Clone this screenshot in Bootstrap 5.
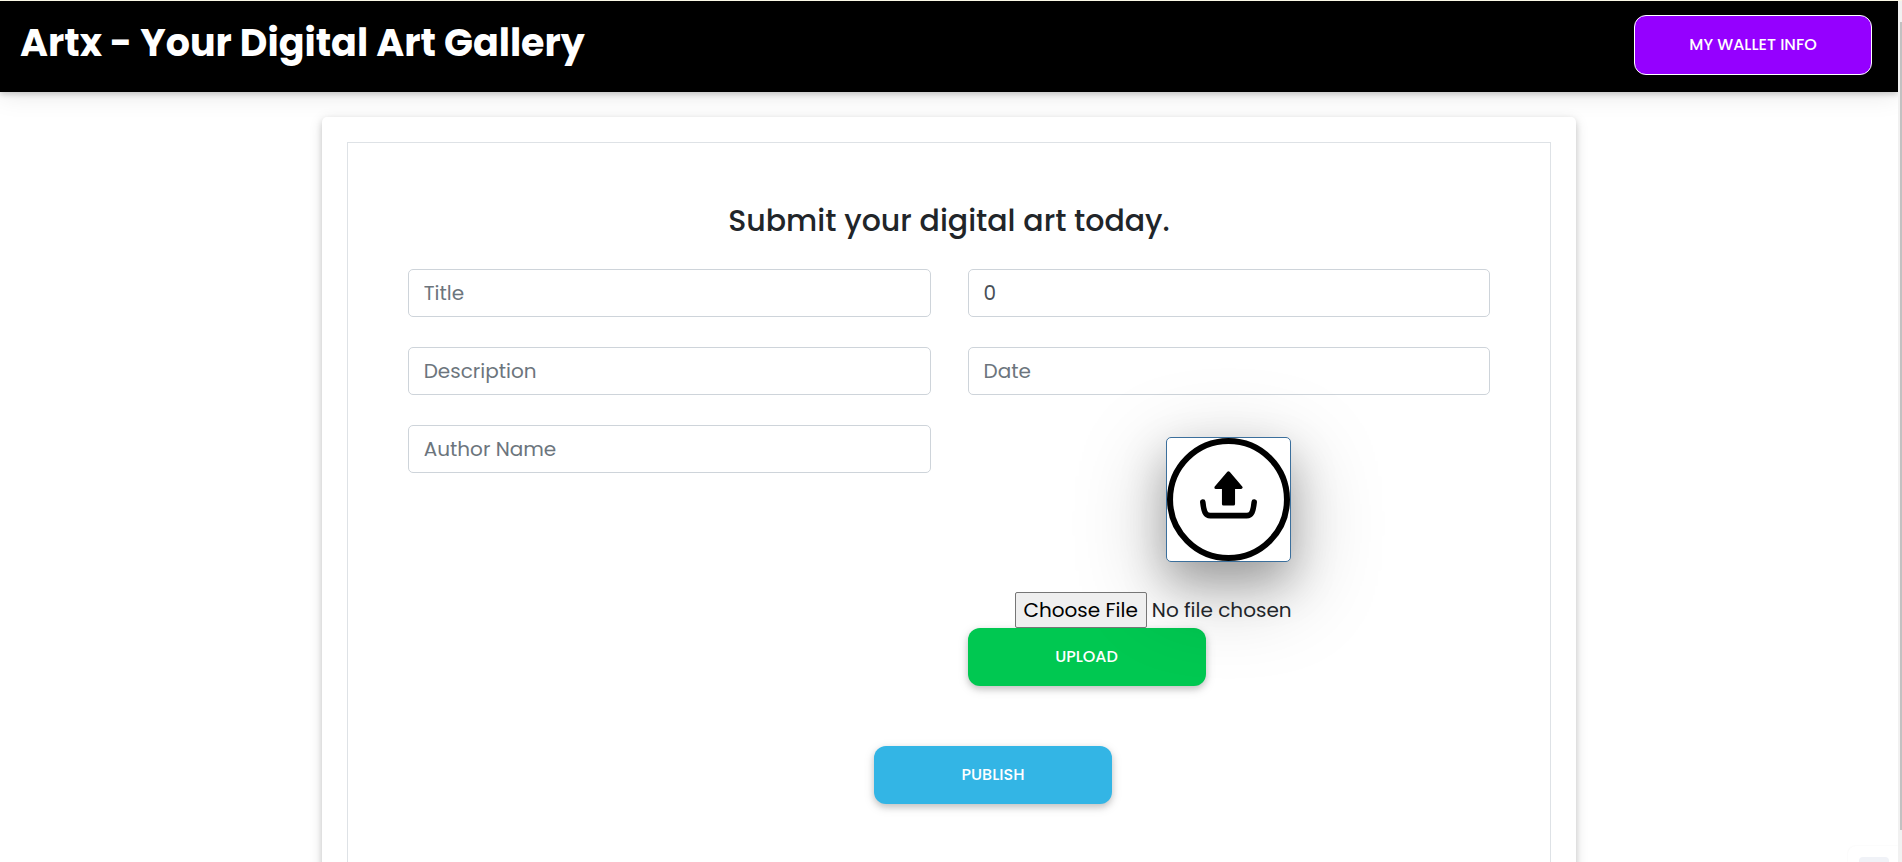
<!DOCTYPE html>
<html lang="en">
<head>
<meta charset="utf-8">
<meta name="viewport" content="width=device-width, initial-scale=1">
<title>Artx - Your Digital Art Gallery</title>
<link href="https://cdn.jsdelivr.net/npm/bootstrap@5.3.0/dist/css/bootstrap.min.css" rel="stylesheet">
<style>
  :root { --app-font: Poppins, Inter, "Open Sans", sans-serif; }
  body { font-family: var(--app-font); font-size: 20px; color: #212529; background: #fff; height: 100vh; overflow: hidden; border-top: 1px solid #fbf8e6; padding-right: 4px; }
  .site-bar { background: #000; height: 91px; padding: 0 26px 4px 20px; box-shadow: 0 2px 6px rgba(0,0,0,.2), 0 3px 24px rgba(0,0,0,.1); }
  .site-title { font-size: 38px; font-weight: 700; line-height: 48px; margin-bottom: 4px; color: #fff; text-decoration: none; }
  .action-btn { --bs-btn-color: #fff; --bs-btn-hover-color: #fff; --bs-btn-border-width: 0; width: 238px; height: 58px; border-radius: 12px; font-size: 16px; font-weight: 500; line-height: 20px; box-shadow: 0 3px 6px rgba(0,0,0,.16), 0 3px 12px rgba(0,0,0,.12); }
  .wallet-btn { --bs-btn-bg: #9500ff; --bs-btn-hover-bg: #8300e0; --bs-btn-border-width: 1px; --bs-btn-border-color: #fff; height: 60px; }
  .upload-btn { --bs-btn-bg: #00c851; --bs-btn-hover-bg: #00b348; }
  .publish-btn { --bs-btn-bg: #33b5e5; --bs-btn-hover-bg: #28a3d1; }
  .sheet { width: 66.1%; margin: 25px auto 0; padding: 25px; background: #fff; border-radius: 5px; box-shadow: 0 3px 6px rgba(0,0,0,.16), 0 3px 14px rgba(0,0,0,.12); }
  .sheet-inner { border: 1px solid #dee2e6; padding: 60px 60px 100px; }
  .sheet-title { font-size: 30px; font-weight: 500; line-height: 36px; margin-bottom: 30px; }
  .form-control { height: 48px; font-size: 20px; padding: 6px 15px; border-color: #ced4da; border-radius: 5px; color: #495057; background: transparent; }
  .form-control::placeholder { color: #6c757d; }
  .form-grid { --bs-gutter-x: 37px; --bs-gutter-y: 30px; }
  .preview { width: 125px; height: 125px; margin: 12px auto 30px; position: relative; background: #fff; border: 1px solid #3b6f9c; border-radius: 5px; box-shadow: 0 20px 44px rgba(0,0,0,.26), 0 24px 90px rgba(0,0,0,.26); }
  .preview svg { display: block; width: 100%; height: 100%; }
  .file-pick { display: block; width: 330px; height: 36px; margin-left: 47px; font-size: 20px; line-height: 30px; position: relative; }
  .file-pick::file-selector-button { appearance: none; -webkit-appearance: none; height: 36px; padding: 0 8px; margin-right: 5px; background: #efefef; border: 1px solid #767676; border-radius: 2px; color: #000; }
  .publish-row { padding-left: 88px; margin-top: 60px; }
  .scroll-track { position: fixed; top: 1px; right: 0; bottom: 0; width: 4px; background: #f1f1f1; }
  .scroll-thumb { position: absolute; top: 21px; right: 0; bottom: 32px; width: 2px; background: #c1c1c1; }
  .corner-tab { position: fixed; right: 4px; bottom: 0; width: 50px; height: 16px; padding: 11px 9px 0 11px; border-radius: 8px 0 0 0; background: #fff; box-shadow: 0 0 2px rgba(0,0,0,.06); }
  .corner-tab span { display: block; height: 5px; border-radius: 4px 4px 0 0; background: #f0f2f7; }
</style>
</head>
<body>
<header class="site-bar d-flex align-items-center justify-content-between">
  <a class="site-title" href="#">Artx - Your Digital Art Gallery</a>
  <button type="button" class="btn action-btn wallet-btn">MY WALLET INFO</button>
</header>

<main class="sheet">
  <form class="sheet-inner">
    <h1 class="sheet-title text-center">Submit your digital art today.</h1>
    <div class="row form-grid">
      <div class="col-6"><input class="form-control" type="text" placeholder="Title" aria-label="Title"></div>
      <div class="col-6"><input class="form-control" type="text" value="0" aria-label="Price"></div>
      <div class="col-6"><input class="form-control" type="text" placeholder="Description" aria-label="Description"></div>
      <div class="col-6"><input class="form-control" type="text" placeholder="Date" aria-label="Date"></div>
      <div class="col-6"><input class="form-control" type="text" placeholder="Author Name" aria-label="Author Name"></div>
      <div class="col-6">
        <div class="preview">
          <svg viewBox="0 0 122 122" aria-hidden="true">
            <circle cx="61" cy="61" r="58" fill="#fff" stroke="#000" stroke-width="6"/>
            <path d="M61 34.500 L73.500 49 H66 V65.500 H56 V49 H48.500 Z" fill="#000" stroke="#000" stroke-width="3" stroke-linejoin="round"/>
            <path d="M35.500 63.500 C36.500 73 38 77 43 77 H79 C84 77 85.500 73 86.500 63.500" fill="none" stroke="#000" stroke-width="5.500" stroke-linecap="round"/>
          </svg>
        </div>
        <input class="file-pick" type="file" aria-label="Artwork file">
        <button type="button" class="btn action-btn upload-btn">UPLOAD</button>
      </div>
    </div>
    <div class="publish-row text-center"><button type="button" class="btn action-btn publish-btn">PUBLISH</button></div>
  </form>
</main>

<div class="corner-tab"><span></span></div>
<div class="scroll-track"><div class="scroll-thumb"></div></div>
<script src="https://cdn.jsdelivr.net/npm/bootstrap@5.3.0/dist/js/bootstrap.bundle.min.js"></script>
</body>
</html>
